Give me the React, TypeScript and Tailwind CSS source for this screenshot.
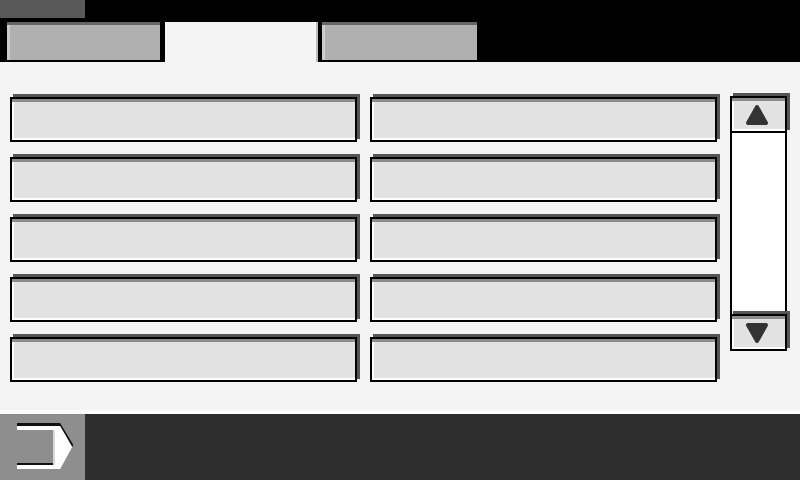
import React from 'react';

const btnShadow =
  'shadow-[3px_-3px_0_#555555,inset_0_3px_0_#8c8c8c,inset_2px_-2px_0_#ffffff]';

function ListButton() {
  return <button className={`h-[45px] w-full border-2 border-black bg-[#e2e2e2] ${btnShadow}`} />;
}

function Triangle({ down }: { down?: boolean }) {
  return (
    <svg width="24" height="22" viewBox="0 0 24 22">
      <polygon
        points={down ? '3,3 21,3 12,19' : '12,3 21,19 3,19'}
        fill="#333333"
        stroke="#333333"
        strokeWidth="4"
        strokeLinejoin="round"
      />
    </svg>
  );
}

function ScrollButton({ down }: { down?: boolean }) {
  return (
    <button
      className={`flex h-[37px] w-full items-center justify-center border-2 border-black bg-[#e2e2e2] pr-[4px] ${btnShadow}`}
    >
      <Triangle down={down} />
    </button>
  );
}

function NextIcon() {
  return (
    <svg width="80" height="66" viewBox="0 0 80 66">
      {/* dark edge */}
      <path d="M17 11 H59 L71 31 L59 51 H17" fill="none" stroke="#111" strokeWidth="4" strokeLinejoin="miter" />
      {/* filled tip */}
      <polygon points="54,15 59,15 70,34 59,53 54,53" fill="#ffffff" />
      <path d="M17 14 H59 L70 33 L59 53 H17" fill="none" stroke="#ffffff" strokeWidth="4" strokeLinejoin="miter" />
      <line x1="54" y1="16" x2="54" y2="51" stroke="#d8d8d8" strokeWidth="2" />
    </svg>
  );
}

export default function App() {
  const rows = [0, 1, 2, 3, 4];

  return (
    <div
      className="flex h-[480px] w-[800px] flex-col overflow-hidden bg-black"
      style={{ fontFamily: "'Liberation Sans', Arial, sans-serif" }}
    >
      {/* Top tab strip */}
      <div className="relative h-[62px] shrink-0 bg-black">
        <div className="absolute left-0 top-0 h-[18px] w-[85px] bg-[#595959]" />
        <div className="flex h-full items-end pl-[7px]">
          <div className="h-[40px] w-[156px] border-r-[3px] border-b-[2px] border-black bg-[#b0b0b0] shadow-[inset_0_3px_0_#666666,inset_3px_0_0_#cccccc]" />
          <div className="ml-[2px] h-[40px] w-[153px] border-r-2 border-[#bdbdbd] bg-[#f4f4f4]" />
          <div className="ml-[4px] h-[40px] w-[155px] border-b-[2px] border-black bg-[#b0b0b0] shadow-[inset_0_3px_0_#666666,inset_3px_0_0_#cccccc]" />
        </div>
      </div>

      {/* Content */}
      <div className="flex h-[352px] shrink-0 border-b-4 border-[#fbfbfb] bg-[#f4f4f4] pl-[10px] pt-[35px]">
        <div className="grid w-[707px] grid-cols-2 gap-x-[13px] gap-y-[15px] self-start">
          {rows.map((r) => (
            <React.Fragment key={r}>
              <ListButton />
              <ListButton />
            </React.Fragment>
          ))}
        </div>

        <div className="-mt-px ml-[13px] flex w-[57px] flex-col self-start">
          <ScrollButton />
          <div className="h-[181px] border-x-2 border-black bg-white" />
          <ScrollButton down />
        </div>
      </div>

      {/* Bottom bar */}
      <div className="flex h-[66px] shrink-0">
        <button className="flex h-full w-[85px] items-center justify-start bg-[#8e8e8e]">
          <NextIcon />
        </button>
        <div className="flex-1 bg-[#2e2e2e]" />
      </div>
    </div>
  );
}
